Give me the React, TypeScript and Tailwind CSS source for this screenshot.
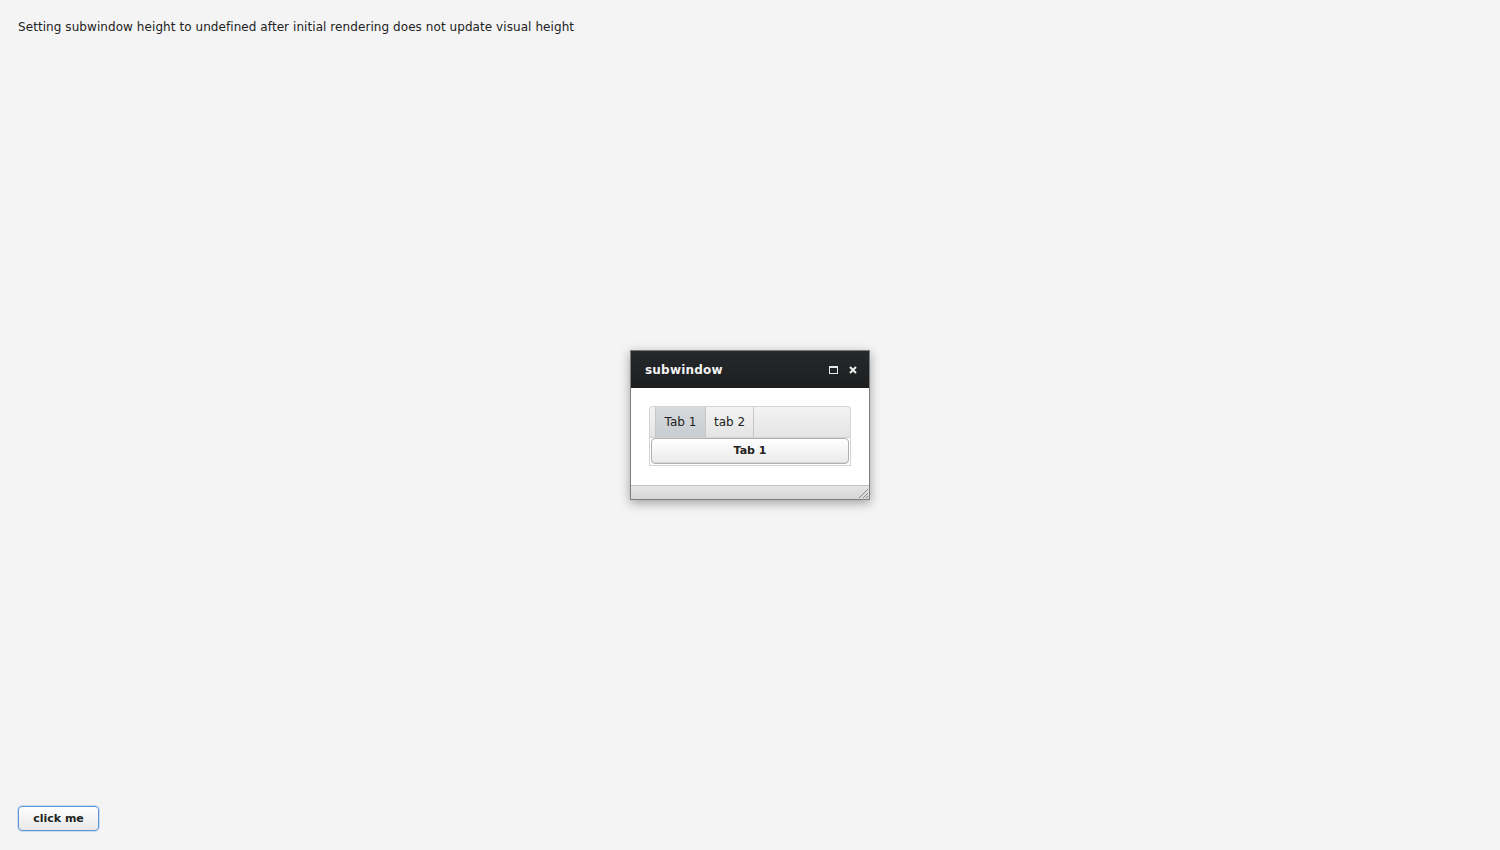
const font = "font-['DejaVu_Sans',sans-serif]";

const MaximizeIcon = () => (
  <svg width="9" height="8" viewBox="0 0 9 8">
    <rect x="0.5" y="0.5" width="8" height="7" fill="none" stroke="#e8e8e8" strokeWidth="1" />
    <rect x="0" y="0" width="9" height="2" fill="#e8e8e8" />
  </svg>
);

const CloseIcon = () => (
  <svg width="8" height="8" viewBox="0 0 8 8">
    <path d="M1 1 L7 7 M7 1 L1 7" stroke="#f0f0f0" strokeWidth="2" />
  </svg>
);

const ResizeGrip = () => (
  <svg width="11" height="11" viewBox="0 0 11 11">
    <path d="M10 1 L1 10 M10 5 L5 10 M10 8 L8 10" stroke="#8a8a8a" strokeWidth="1" />
  </svg>
);

const TabSheet = () => (
  <div className="flex flex-col">
    <div className="flex h-[32px] rounded-t-[3px] border border-[#d4d4d4] bg-gradient-to-b from-[#f3f3f3] to-[#e4e4e4]">
      <div className="w-[6px] border-r border-[#c6c6c6]" />
      <div className="flex w-[49px] items-center justify-center bg-gradient-to-b from-[#d6dadd] to-[#c7cdd1] text-[12px] text-[#222]">
        Tab 1
      </div>
      <div className="flex w-[49px] items-center justify-center border-x border-[#c6c6c6] text-[12px] text-[#222]">
        tab 2
      </div>
      <div className="flex-1" />
    </div>
    <div className="border-x border-b border-[#d4d4d4] px-px pb-px">
      <button className="flex h-[26px] w-full items-center justify-center rounded-[4px] border border-[#b0b0b0] bg-gradient-to-b from-white to-[#eaeaea] text-[11px] font-bold text-[#222] shadow-[inset_0_-1px_0_#d8d8d8]">
        Tab 1
      </button>
    </div>
  </div>
);

const SubWindow = () => (
  <div className="flex w-[240px] flex-col border border-[#7d7d7d] bg-white shadow-[0_3px_10px_rgba(0,0,0,0.35)]">
    <div className="flex h-[37px] items-center bg-gradient-to-b from-[#26292b] to-[#1c1e20] pl-[14px] pr-[12px]">
      <span className="flex-1 text-[12px] font-bold tracking-[0.2px] text-[#f2f2f2]">subwindow</span>
      <div className="flex items-center gap-[11px]">
        <MaximizeIcon />
        <CloseIcon />
      </div>
    </div>
    <div className="px-[18px] pt-[18px] pb-[19px]">
      <TabSheet />
    </div>
    <div className="flex h-[14px] items-end justify-end border-t border-[#c4c4c4] bg-gradient-to-b from-[#e6e6e6] to-[#d6d6d6]">
      <ResizeGrip />
    </div>
  </div>
);

export default function App() {
  return (
    <div className={`${font} relative flex h-[850px] w-full flex-col justify-between bg-[#f4f4f4] px-[18px] pt-[19px] pb-[19px] text-[#222]`}>
      <p className="text-[12px] leading-[16px] tracking-[0.07px]">
        Setting subwindow height to undefined after initial rendering does not update visual height
      </p>
      <button className="h-[25px] w-[81px] rounded-[4px] border border-[#5b95d8] bg-gradient-to-b from-white to-[#e8e8e8] pt-px text-[11px] font-bold text-[#222] shadow-[0_0_0_1px_rgba(130,175,230,0.35)]">
        click me
      </button>
      <div className="absolute inset-0 flex items-center justify-center">
        <SubWindow />
      </div>
    </div>
  );
}
